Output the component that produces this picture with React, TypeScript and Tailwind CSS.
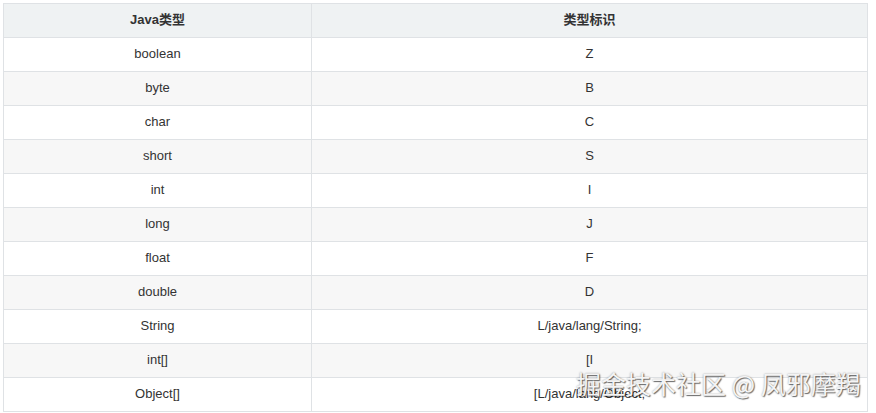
import React from "react";

const rows: [string, string][] = [
  ["boolean", "Z"],
  ["byte", "B"],
  ["char", "C"],
  ["short", "S"],
  ["int", "I"],
  ["long", "J"],
  ["float", "F"],
  ["double", "D"],
  ["String", "L/java/lang/String;"],
  ["int[]", "[I"],
  ["Object[]", "[L/java/lang/Object;"],
];

export default function App() {
  return (
    <div
      className="relative w-[876px] h-[413px] overflow-hidden bg-white pl-[3px] pt-[3px] text-[13px] text-[#333]"
      style={{ fontFamily: '"Liberation Sans", Arial, "Noto Sans CJK SC", sans-serif' }}
    >
      <table className="w-[865px] border-collapse table-fixed">
        <colgroup>
          <col className="w-[308px]" />
          <col />
        </colgroup>
        <thead>
          <tr className="h-[34px] bg-[#eff2f3]">
            <th className="border border-[#dfe2e5] text-center font-bold p-0 pb-[2px]">Java类型</th>
            <th className="border border-[#dfe2e5] text-center font-bold p-0 pb-[2px]">类型标识</th>
          </tr>
        </thead>
        <tbody>
          {rows.map(([a, b], i) => (
            <tr key={a} className={i % 2 === 1 ? "h-[34px] bg-[#f7f7f7]" : "h-[34px] bg-white"}>
              <td className="border border-[#dfe2e5] text-center p-0 pb-[2px]">{a}</td>
              <td className="border border-[#dfe2e5] text-center p-0 pb-[2px]">{b}</td>
            </tr>
          ))}
        </tbody>
      </table>
      <div
        className="absolute left-[576px] top-[367px] text-[25px] leading-[32px] whitespace-nowrap text-[#f4f4f4] [text-shadow:1px_1px_1px_rgba(0,0,0,0.55),0_0_2px_rgba(0,0,0,0.35)]"
        style={{ fontFamily: '"Noto Sans CJK SC", sans-serif' }}
      >
        掘金技术社区 @ 凤邪摩羯
      </div>
    </div>
  );
}
